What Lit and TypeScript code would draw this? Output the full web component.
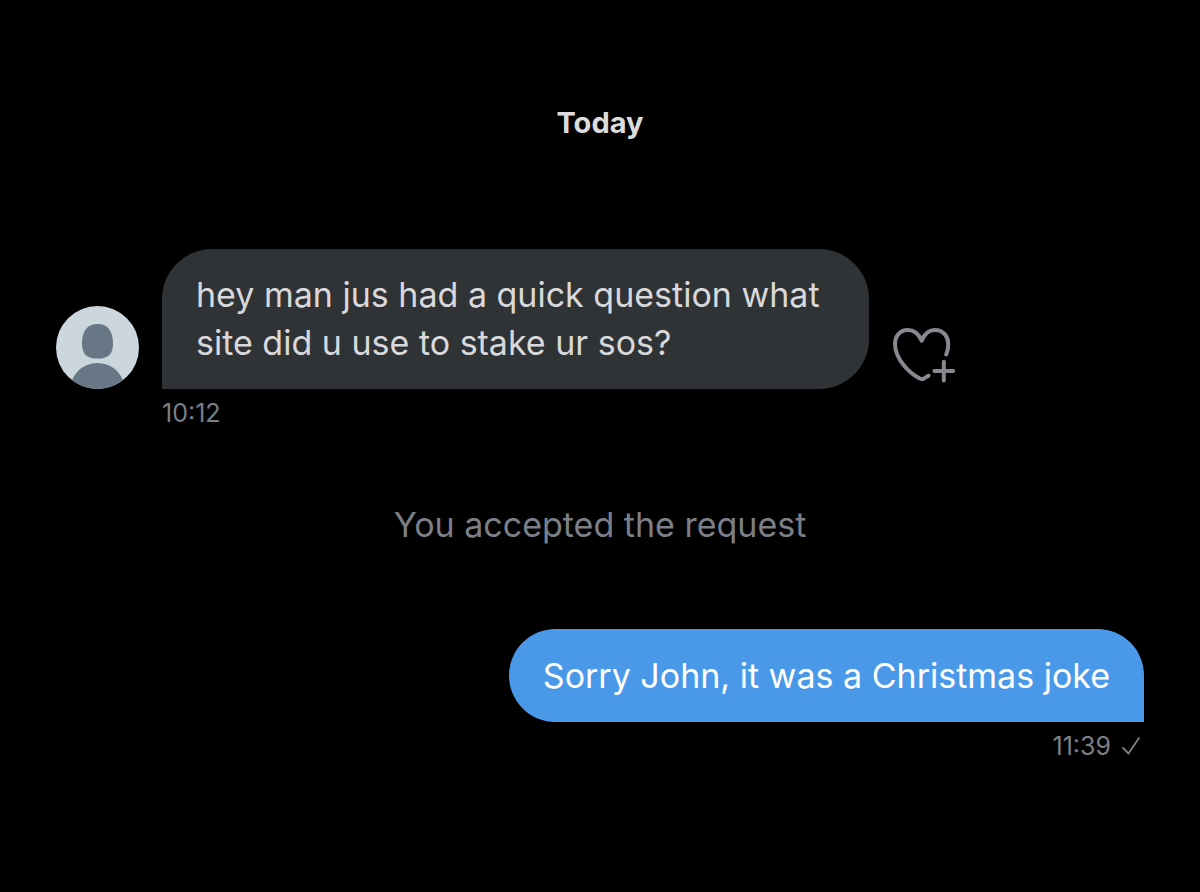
import { LitElement, html, css } from "lit";
import { customElement, property } from "lit/decorators.js";

@customElement("chat-avatar")
export class ChatAvatar extends LitElement {
  static styles = css`
    :host {
      display: block;
      flex: none;
      width: 83px;
      height: 83px;
      border-radius: 50%;
      overflow: hidden;
      background: #ccd6dd;
    }
    svg {
      display: block;
    }
  `;

  render() {
    return html`
      <svg width="83" height="83" viewBox="0 0 83 83" fill="#687785" role="img" aria-label="Default profile picture">
        <path d="M41.5 18C51.5 18 57 25 57 37.5C57 48 52.5 52.6 41.5 52.6C30.5 52.6 26 48 26 37.5C26 25 31.5 18 41.5 18Z" />
        <circle cx="41.5" cy="84.5" r="27.5" />
      </svg>
    `;
  }
}

@customElement("chat-message")
export class ChatMessage extends LitElement {
  @property() text = "";
  @property() time = "";
  @property({ type: Boolean, reflect: true }) sent = false;

  static styles = css`
    :host {
      display: block;
    }
    .row {
      display: flex;
      align-items: flex-end;
    }
    chat-avatar {
      margin-right: 23px;
    }
    .bubble {
      box-sizing: border-box;
      max-width: 65%;
      margin: 0;
      padding: 22px 34px;
      border-radius: 50px 50px 50px 0;
      background: #303336;
      color: #d9d9dc;
      font-size: 34px;
      line-height: 48px;
    }
    .meta {
      display: flex;
      align-items: center;
      gap: 10px;
      margin: 8px 0 0 106px;
      color: #7c7f83;
      font-size: 25px;
      line-height: 32px;
    }
    .react {
      flex: none;
      margin: 0 0 6px 24px;
      padding: 0;
      border: 0;
      background: none;
      color: #86898f;
      cursor: pointer;
    }
    svg {
      display: block;
      fill: none;
      stroke: currentColor;
      stroke-linecap: round;
      stroke-linejoin: round;
    }
    :host([sent]) .row,
    :host([sent]) .meta {
      justify-content: flex-end;
    }
    :host([sent]) .bubble {
      padding: 23px 34px 22px;
      border-radius: 50px 50px 0 50px;
      background: #4a99e9;
      color: #fff;
    }
    :host([sent]) .meta {
      margin: 8px 3px 0 0;
    }
  `;

  render() {
    return html`
      <div class="row">
        ${this.sent ? null : html`<chat-avatar></chat-avatar>`}
        <p class="bubble">${this.text}</p>
        ${this.sent
          ? null
          : html`
              <button class="react" type="button" aria-label="Add reaction">
                <svg width="64" height="56" viewBox="0 0 64 56" stroke-width="4">
                  <path d="M53.2 27.5C54.7 24 55.4 20.5 55.2 16.5C54.9 8.500 49.500 3 42 3C36 3 31.500 6.800 28.600 13.700C25.700 6.800 20.800 3 14.700 3C7.500 3 1.900 8.600 2 17C2.200 32 16 46 26.500 51.400Q28.700 52.700 31 51.400L35.500 48.700" />
                  <path d="M50.800 34.800V53.400M41.500 44.100H60.100" />
                </svg>
              </button>
            `}
      </div>
      <div class="meta">
        <time>${this.time}</time>
        ${this.sent
          ? html`
              <svg width="20" height="20" viewBox="0 0 20 20" stroke-width="1.8" role="img" aria-label="Sent">
                <path d="M2 12L7.5 17.5L18 2" />
              </svg>
            `
          : null}
      </div>
    `;
  }
}

@customElement("app-root")
export class AppRoot extends LitElement {
  static styles = css`
    :host {
      display: block;
      box-sizing: border-box;
      min-height: 100vh;
      padding: 103px 56px 64px;
      background: #000;
      font-family: Inter, "Liberation Sans", sans-serif;
    }
    .day {
      margin: 0 0 106px;
      color: #dcdcdc;
      font-size: 29px;
      font-weight: 700;
      line-height: 40px;
      text-align: center;
    }
    .notice {
      margin: 72px 0 80px;
      color: #7c7f86;
      font-size: 34px;
      line-height: 48px;
      text-align: center;
    }
  `;

  render() {
    return html`
      <main>
        <h1 class="day">Today</h1>
        <chat-message text="hey man jus had a quick question what site did u use to stake ur sos?" time="10:12"></chat-message>
        <p class="notice">You accepted the request</p>
        <chat-message sent text="Sorry John, it was a Christmas joke" time="11:39"></chat-message>
      </main>
    `;
  }
}
